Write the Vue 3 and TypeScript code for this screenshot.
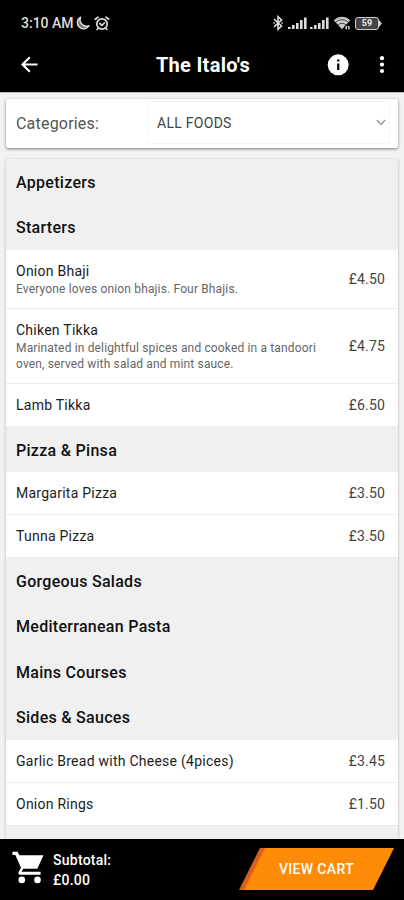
<script setup lang="ts">
interface Section { kind: 'section'; name: string; h: number }
interface Dish { kind: 'dish'; name: string; price: string; h: number; desc?: string[] }

const rows: (Section | Dish)[] = [
  { kind: 'section', name: 'Appetizers', h: 45 },
  { kind: 'section', name: 'Starters', h: 46 },
  { kind: 'dish', name: 'Onion Bhaji', price: '£4.50', h: 59, desc: ['Everyone loves onion bhajis. Four Bhajis.'] },
  { kind: 'dish', name: 'Chiken Tikka', price: '£4.75', h: 75, desc: ['Marinated in delightful spices and cooked in a tandoori', 'oven, served with salad and mint sauce.'] },
  { kind: 'dish', name: 'Lamb Tikka', price: '£6.50', h: 43 },
  { kind: 'section', name: 'Pizza & Pinsa', h: 45 },
  { kind: 'dish', name: 'Margarita Pizza', price: '£3.50', h: 43 },
  { kind: 'dish', name: 'Tunna Pizza', price: '£3.50', h: 43 },
  { kind: 'section', name: 'Gorgeous Salads', h: 45 },
  { kind: 'section', name: 'Mediterranean Pasta', h: 46 },
  { kind: 'section', name: 'Mains Courses', h: 45 },
  { kind: 'section', name: 'Sides & Sauces', h: 46 },
  { kind: 'dish', name: 'Garlic Bread with Cheese (4pices)', price: '£3.45', h: 43 },
  { kind: 'dish', name: 'Onion Rings', price: '£1.50', h: 43 },
]
const bars = [2, 4, 6, 9, 11.5]
</script>

<template>
  <div class="screen">
    <header class="top">
      <div class="status">
        <span class="time">3:10 AM</span>
        <svg class="moon" width="14" height="14" viewBox="0 0 14 14"><path d="M4.6 1.2A6.2 6.2 0 1 0 13 9.6 6.4 6.4 0 0 1 4.6 1.2Z" fill="#777" stroke="#ddd" stroke-width="1.4" stroke-linejoin="round" /></svg>
        <svg class="alarm" width="16" height="15" viewBox="0 0 16 15" fill="none" stroke="#ddd" stroke-width="1.7" stroke-linecap="round"><circle cx="8" cy="8" r="5.2" /><path d="M1.2 3.2 4 1.2M14.8 3.2 12 1.2M5.8 7.5 8 9.3 10.4 7M4 12.5l-1 1M12 12.5l1 1" /></svg>
        <span class="spring" />
        <svg class="bt" width="10" height="16" viewBox="0 0 10 16" fill="none" stroke="#ddd" stroke-width="1.6"><path d="M1 4.2 8.5 11 5 14.3V1.7L8.5 5 1 11.8" /><path d="M.4 8h1.4M8.4 8h1.4" /></svg>
        <svg v-for="n in 2" :key="n" class="signal" width="19" height="12" viewBox="0 0 19 12"><rect v-for="(b, i) in bars" :key="i" :x="i * 4" :y="12 - b" width="2.6" :height="b" fill="#ddd" /></svg>
        <svg class="wifi" width="18" height="14" viewBox="0 0 18 14" fill="none"><path d="M9 13.2.7 4.2Q9-2.6 17.3 4.2Z" fill="#ccc" /><path d="M2.6 6.1Q9 1.2 15.4 6.1M5.1 8.8Q9 5.7 12.9 8.8" stroke="#333" stroke-width=".9" /><path d="M11.5 11l2-2M12 13.5V10" stroke="#000" stroke-width="1" /><path d="M13.2 10v3.2M15.8 10v3.2" stroke="#ccc" stroke-width="1.6" /></svg>
        <span class="battery"><b>59</b></span>
        <svg class="tip" width="3" height="7" viewBox="0 0 3 7"><path d="M0 0 3 3.5 0 7Z" fill="#ccc" /></svg>
      </div>
      <div class="appbar">
        <svg class="back" width="18" height="18" viewBox="0 0 18 18" fill="none" stroke="#fff" stroke-width="2.1"><path d="M16.5 8.5H2M8.8 1.2 1.5 8.5l7.3 7.3" /></svg>
        <h1>The Italo's</h1>
        <svg class="info" width="22" height="22" viewBox="0 0 22 22"><circle cx="11.2" cy="10.8" r="10.5" fill="#fff" /><path d="M10.1 5.4h2.3v2.2h-2.3zM10.1 9.4h2.3V16h-2.3z" fill="#000" /></svg>
        <svg class="more" width="6" height="18" viewBox="0 0 6 18" fill="#fff"><circle cx="3" cy="2.2" r="2.1" /><circle cx="3" cy="8.6" r="2.1" /><circle cx="3" cy="15" r="2.1" /></svg>
      </div>
    </header>

    <main>
      <section class="filter">
        <span class="label">Categories:</span>
        <div class="select">
          <span>ALL FOODS</span>
          <svg width="10" height="7" viewBox="0 0 10 7" fill="none" stroke="#888" stroke-width="1.1"><path d="M.8 1 5 5.5 9.2 1" /></svg>
        </div>
      </section>
      <section class="menu">
        <div v-for="row in rows" :key="row.name" :class="row.kind" :style="{ height: row.h + 'px' }">
          <h2 v-if="row.kind === 'section'">{{ row.name }}</h2>
          <template v-else>
            <div class="info-text">
              <h3>{{ row.name }}</h3>
              <p v-for="line in row.desc" :key="line">{{ line }}</p>
            </div>
            <span class="price">{{ row.price }}</span>
          </template>
        </div>
      </section>
    </main>

    <footer>
      <svg class="cart" width="32" height="33" viewBox="0 0 32 33" fill="#fff"><path d="M.5.8H5.6L7.4 4.2H31.5L25.3 17.8H11.2L9.6 20.8H28.6V23.8H8.2Q5.5 23.4 6.7 20.7L9 16.7 3.3 3.9H.5Z" /><circle cx="9.8" cy="28.9" r="3.3" /><circle cx="25.5" cy="28.9" r="3.3" /></svg>
      <div class="subtotal"><span>Subtotal:</span><span>£0.00</span></div>
      <button class="view">VIEW CART</button>
    </footer>
  </div>
</template>

<style>
body { margin: 0; background: #000; }
</style>
<style scoped>
* { box-sizing: border-box; }
.screen { width: 404px; height: 900px; display: flex; flex-direction: column; overflow: hidden; background: #f2f2f2; font-family: Roboto, "Liberation Sans", sans-serif; }
h1, h2, h3, p { margin: 0; font-weight: 500; white-space: nowrap; }
.top { height: 92px; flex: none; background: #000; color: #fff; }
.status { height: 46px; display: flex; align-items: center; padding: 0 22px 0 21px; }
.time { font-size: 14px; font-weight: 500; color: #ddd; width: 54px; white-space: nowrap; }
.moon { margin-left: 1px; }
.alarm { margin-left: 4px; }
.spring { flex: 1; }
.bt { margin-right: 5px; }
.signal { margin-right: 3.5px; }
.wifi { margin-right: 4.5px; }
.battery { width: 24px; height: 13px; border: 1.5px solid #ccc; border-radius: 3px; display: flex; align-items: center; justify-content: center; background: #444; color: #eee; }
.battery b { font-size: 9px; line-height: 9px; }
.appbar { height: 38px; display: flex; align-items: center; padding: 0 19px 0 21px; }
.appbar h1 { flex: 1; text-align: center; font-size: 20px; font-weight: 700; letter-spacing: .3px; padding-left: 40px; }
.back { flex: none; }
.more { margin-left: 30px; }
main { flex: 1; min-height: 0; padding: 6px 6px 0; overflow: hidden; border-top: 1px solid #bbb; }
.filter { height: 49px; background: #fff; border-radius: 2px; box-shadow: 0 1px 3px rgba(0, 0, 0, .5); display: flex; align-items: center; padding: 0 8px 2px 10px; }
.label { width: 131px; padding-top: 2px; font-size: 16px; color: #555; letter-spacing: .2px; }
.select { flex: 1; height: 43px; border: 1px solid #f6f6f6; padding: 0 3px 0 9px; display: flex; align-items: center; justify-content: space-between; font-size: 14px; color: #444; letter-spacing: .28px; }
.menu { margin-top: 11px; height: 720px; background: #f0f0f0; box-shadow: 0 1px 3px rgba(0, 0, 0, .25); }
.section { display: flex; align-items: center; padding: 2px 0 0 10px; background: #f0f0f0; }
.section:nth-child(even) { padding-top: 1px; }
.section:nth-child(6), .section:nth-child(11) { padding-top: 2px; }
h2 { font-size: 16px; line-height: 20px; color: #111; letter-spacing: .29px; }
.dish { display: flex; align-items: center; padding: 0 13px 0 10px; background: #fff; border-bottom: 1px solid #ececec; }
.info-text { flex: 1; }
h3 { font-size: 14px; line-height: 20px; color: #1c1c1c; font-weight: 400; letter-spacing: .25px; }
p { font-size: 12px; line-height: 16px; color: #666; font-weight: 400; letter-spacing: .15px; }
.price { font-size: 14px; color: #444; letter-spacing: .15px; }
footer { flex: none; height: 61px; background: #000; color: #fff; display: flex; align-items: flex-start; padding: 0 10px 0 12px; }
.cart { margin-top: 12px; flex: none; }
.subtotal { margin: 11px 0 0 9px; display: flex; flex-direction: column; font-size: 14px; line-height: 20px; font-weight: 500; letter-spacing: .25px; flex: 1; }
.view { width: 155px; height: 42px; margin-top: 9px; padding: 0; border: 0; color: #fff; font: 500 14px Roboto, sans-serif; letter-spacing: .35px; clip-path: polygon(21px 0, 100% 0, 134px 100%, 0 100%); background: linear-gradient(116.6deg, #d9601a 0 22.8px, #ff8a05 23.8px); }
</style>
